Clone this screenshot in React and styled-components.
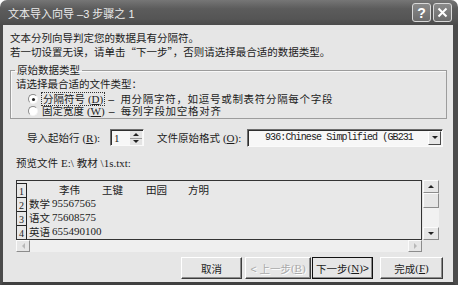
import styled, { createGlobalStyle } from "styled-components";

const GlobalStyle = createGlobalStyle`
  html, body {
    margin: 0;
    padding: 0;
    background: #ffffff;
  }
  body {
    font-family: "Liberation Sans", "Noto Sans CJK SC", sans-serif;
  }
`;

const SERIF = `"Liberation Serif", "Noto Sans CJK SC", serif`;

const Window = styled.div`
  width: 458px;
  height: 285px;
  display: flex;
  flex-direction: column;
  border-radius: 7px 7px 0 0;
  overflow: hidden;
  color: #1c1c1c;
  font-size: 10.5px;
`;

const TitleBar = styled.div`
  height: 25px;
  flex: none;
  display: flex;
  align-items: center;
  justify-content: space-between;
  padding: 0 6px 0 8px;
  background: linear-gradient(#767676, #5c5c5c 35%, #555555 75%, #4b4b4b);
  color: #ececec;
  font-size: 11px;
`;

const TitleButtons = styled.div`
  display: flex;
  gap: 2px;
`;

const TitleButton = styled.div`
  width: 17px;
  height: 17px;
  border: 1px solid #d9d9d9;
  border-radius: 3px;
  background: linear-gradient(#8a8a8a, #6c6c6c);
  color: #ffffff;
  display: flex;
  align-items: center;
  justify-content: center;
  font: bold 14px "Liberation Sans", sans-serif;
`;

const Body = styled.div`
  flex: 1;
  display: flex;
  flex-direction: column;
  background: #e6e6e6;
  border-left: 3px solid #4b4b4b;
  border-right: 5px solid #4b4b4b;
  border-bottom: 5px solid #404040;
  padding: 7px 5px 3px 7px;
`;

const Intro = styled.p`
  margin: 0;
  line-height: 13px;
`;

const Cjk = styled.span`
  font-family: "Noto Sans CJK SC", sans-serif;
`;

const Group = styled.fieldset`
  margin: 5px 1px 0 0;
  padding: 0 0 1px 5px;
  min-width: 0;
  border: 1px solid #9c9c9c;
  box-shadow: inset 1px 1px 0 #f8f8f8;
`;

const Legend = styled.legend`
  padding: 0 2px;
  margin-left: -1px;
  line-height: 13px;
`;

const Line = styled.div`
  line-height: 13px;
  padding-top: 1px;
`;

const RadioRow = styled.div`
  display: flex;
  align-items: center;
  gap: 4px;
  height: 12px;
  line-height: 12px;
  padding-left: 12px;
  margin-top: ${(p) => (p.$first ? "2px" : "0")};
  white-space: nowrap;
`;

const RadioDot = styled.span`
  width: 8px;
  height: 8px;
  border-radius: 50%;
  border: 1px solid;
  border-color: #8a8a8a #f4f4f4 #f4f4f4 #8a8a8a;
  background: #ffffff;
  display: flex;
  align-items: center;
  justify-content: center;
  &::after {
    content: "";
    width: 3px;
    height: 3px;
    border-radius: 50%;
    background: ${(p) => (p.$checked ? "#222" : "transparent")};
  }
`;

const Focus = styled.span`
  outline: 1px dotted #333;
  outline-offset: 0;
  padding: 0 1px;
  margin-right: 4px;
`;

const Hint = styled.span`
  margin-left: ${(p) => p.$ml || 0}px;
  letter-spacing: 0.7px;
  word-spacing: 2px;
`;

const Serif = styled.span`
  font-family: ${SERIF};
  font-size: 11px;
`;

const Key = styled.u`
  text-underline-offset: 1px;
`;

const ImportRow = styled.div`
  display: flex;
  align-items: center;
  height: 17px;
  margin-top: 10px;
  padding-left: 17px;
  padding-right: 5px;
  white-space: nowrap;
`;

const FieldLabel = styled.span`
  width: ${(p) => p.$w}px;
  flex: none;
  margin-left: ${(p) => p.$ml || 0}px;
`;

const Sunken = styled.div`
  height: 15px;
  border: 1px solid;
  border-color: #6e6e6e #fafafa #fafafa #6e6e6e;
  box-shadow: inset 1px 1px 0 #2e2e2e;
  background: #f7f7f7;
  display: flex;
  align-items: stretch;
`;

const Spinner = styled(Sunken)`
  width: 32px;
  flex: none;
`;

const SpinValue = styled.span`
  flex: 1;
  padding: 1px 0 0 3px;
  font: 11px ${SERIF};
  line-height: 14px;
`;

const SpinButtons = styled.div`
  width: 12px;
  display: flex;
  flex-direction: column;
  margin: 1px 1px 0 0;
  background: #e4e4e4;
`;

const SpinHalf = styled.div`
  flex: 1;
  display: flex;
  align-items: center;
  justify-content: center;
  border-bottom: ${(p) => (p.$top ? "1px solid #9a9a9a" : "none")};
`;

const Tri = styled.span`
  width: 0;
  height: 0;
  border-left: ${(p) => p.$s}px solid transparent;
  border-right: ${(p) => p.$s}px solid transparent;
  ${(p) =>
    p.$up
      ? `border-bottom: ${p.$s}px solid ${p.$c || "#222"};`
      : `border-top: ${p.$s}px solid ${p.$c || "#222"};`}
`;

const TriSide = styled.span`
  width: 0;
  height: 0;
  border-top: 3px solid transparent;
  border-bottom: 3px solid transparent;
  ${(p) =>
    p.$left
      ? `border-right: 3px solid #b8b8b8;`
      : `border-left: 3px solid #b8b8b8;`}
`;

const Select = styled(Sunken)`
  flex: 1;
  height: 16px;
`;

const SelectValue = styled.span`
  flex: 1;
  padding-left: 17px;
  font-family: "Liberation Mono", "DejaVu Sans Mono", monospace;
  font-size: 10px;
  letter-spacing: -0.9px;
  line-height: 16px;
  overflow: hidden;
`;

const SelectArrow = styled.div`
  width: 11px;
  margin: 1px 1px 1px 0;
  background: #e6e6e6;
  border: 1px solid;
  border-color: #ffffff #4a4a4a #4a4a4a #ffffff;
  display: flex;
  align-items: center;
  justify-content: center;
`;

const PreviewLabel = styled.div`
  margin-top: 11px;
  padding-left: 6px;
  line-height: 13px;
`;

const PreviewGrid = styled.div`
  margin: 10px 0 0 6px;
  display: grid;
  grid-template-columns: 406px 17px;
  grid-template-rows: 60px 12px;
`;

const Frame = styled.div`
  border: 1px solid #333333;
  background: #e8e8e8;
  padding-top: 2px;
  overflow: hidden;
`;

const PreviewRow = styled.div`
  display: flex;
  height: 14px;
  line-height: 14px;
  white-space: nowrap;
`;

const RowNum = styled.span`
  width: 10px;
  flex: none;
  border-top: 1px solid #222;
  border-right: 1px solid #222;
  font: 10px ${SERIF};
  line-height: 15px;
  text-align: center;
  box-sizing: border-box;
`;

const RowText = styled.span`
  padding-left: 2px;
  display: flex;
`;

const Cell = styled.span`
  width: ${(p) => p.$w}px;
  flex: none;
`;

const Digits = styled.span`
  font: 11px ${SERIF};
  margin-left: 2px;
`;

const HScroll = styled.div`
  background: #efefef;
  display: flex;
  justify-content: space-between;
`;

const ScrollBtn = styled.div`
  width: ${(p) => p.$w}px;
  height: ${(p) => p.$h}px;
  background: #e6e6e6;
  border: 1px solid;
  border-color: #fbfbfb #8c8c8c #8c8c8c #fbfbfb;
  box-sizing: border-box;
  display: flex;
  align-items: center;
  justify-content: center;
`;

const VScroll = styled.div`
  margin-left: 1px;
  background: #f1f1f1;
  display: flex;
  flex-direction: column;
  justify-content: space-between;
`;

const Thumb = styled(ScrollBtn)`
  flex: none;
`;

const VTop = styled.div`
  display: flex;
  flex-direction: column;
`;

const ButtonRow = styled.div`
  display: flex;
  justify-content: flex-end;
  margin-top: 5px;
  padding-right: 5px;
`;

const Button = styled.div`
  width: ${(p) => p.$w}px;
  height: 22px;
  margin-left: ${(p) => p.$ml}px;
  box-sizing: border-box;
  background: #e6e6e6;
  border: 1px solid;
  border-color: #ffffff #3c3c3c #3c3c3c #ffffff;
  box-shadow: inset -1px -1px 0 #8c8c8c;
  display: flex;
  align-items: center;
  justify-content: center;
  white-space: nowrap;
  color: ${(p) => (p.$disabled ? "#a9a9a9" : "#1c1c1c")};
  text-shadow: ${(p) => (p.$disabled ? "1px 1px 0 #ffffff" : "none")};
  outline: ${(p) => (p.$default ? "1px solid #111" : "none")};
  outline-offset: -1px;
`;

export default function App() {
  return (
    <>
      <GlobalStyle />
      <Window>
        <TitleBar>
          <span>文本导入向导 –3 步骤之 1</span>
          <TitleButtons>
            <TitleButton>?</TitleButton>
            <TitleButton>
              <svg width="11" height="11" viewBox="0 0 11 11">
                <path d="M1.5 1.5 L9.5 9.5 M9.5 1.5 L1.5 9.5" stroke="#fff" strokeWidth="2" />
              </svg>
            </TitleButton>
          </TitleButtons>
        </TitleBar>

        <Body>
          <Intro>
            文本分列向导判定您的数据具有分隔符。
            <br />
            若一切设置无误，请单击<Cjk>“</Cjk>下一步<Cjk>”</Cjk>，否则请选择最合适的数据类型。
          </Intro>

          <Group>
            <Legend>原始数据类型</Legend>
            <Line>请选择最合适的文件类型：</Line>
            <RadioRow $first>
              <RadioDot $checked />
              <span>
                <Focus>
                  分隔符号 <Serif>(<Key>D</Key>)</Serif>
                </Focus>
                <Hint>– 用分隔字符，如逗号或制表符分隔每个字段</Hint>
              </span>
            </RadioRow>
            <RadioRow>
              <RadioDot />
              <span>
                固定宽度 <Serif>(<Key>W</Key>)</Serif>
                <Hint $ml={4}>– 每列字段加空格对齐</Hint>
              </span>
            </RadioRow>
          </Group>

          <ImportRow>
            <FieldLabel $w={83}>
              导入起始行 <Serif>(<Key>R</Key>):</Serif>
            </FieldLabel>
            <Spinner>
              <SpinValue>1</SpinValue>
              <SpinButtons>
                <SpinHalf $top>
                  <Tri $up $s={3} />
                </SpinHalf>
                <SpinHalf>
                  <Tri $s={3} />
                </SpinHalf>
              </SpinButtons>
            </Spinner>
            <FieldLabel $w={90} $ml={13}>
              文件原始格式 <Serif>(<Key>O</Key>):</Serif>
            </FieldLabel>
            <Select>
              <SelectValue>936:Chinese Simplified (GB231</SelectValue>
              <SelectArrow>
                <Tri $s={3} />
              </SelectArrow>
            </Select>
          </ImportRow>

          <PreviewLabel>
            预览文件 <Serif>E:\</Serif> 教材 <Serif>\1s.txt:</Serif>
          </PreviewLabel>

          <PreviewGrid>
            <Frame>
              <PreviewRow>
                <RowNum>1</RowNum>
                <RowText>
                  <Cell $w={30} />
                  <Cell $w={43}>李伟</Cell>
                  <Cell $w={44}>王键</Cell>
                  <Cell $w={42}>田园</Cell>
                  <Cell $w={43}>方明</Cell>
                </RowText>
              </PreviewRow>
              <PreviewRow>
                <RowNum>2</RowNum>
                <RowText>
                  数学<Digits>95567565</Digits>
                </RowText>
              </PreviewRow>
              <PreviewRow>
                <RowNum>3</RowNum>
                <RowText>
                  语文<Digits>75608575</Digits>
                </RowText>
              </PreviewRow>
              <PreviewRow>
                <RowNum>4</RowNum>
                <RowText>
                  英语<Digits>655490100</Digits>
                </RowText>
              </PreviewRow>
            </Frame>

            <VScroll>
              <VTop>
                <ScrollBtn $w={16} $h={13}>
                  <Tri $up $s={3} />
                </ScrollBtn>
                <Thumb $w={16} $h={15} />
              </VTop>
              <ScrollBtn $w={16} $h={13}>
                <Tri $s={3} />
              </ScrollBtn>
            </VScroll>

            <HScroll>
              <ScrollBtn $w={14} $h={12}>
                <TriSide $left />
              </ScrollBtn>
              <ScrollBtn $w={14} $h={12}>
                <TriSide />
              </ScrollBtn>
            </HScroll>
          </PreviewGrid>

          <ButtonRow>
            <Button $w={61} $ml={0}>取消</Button>
            <Button $w={66} $ml={3} $disabled>
              &lt; 上一步 <Serif>(<Key>B</Key>)</Serif>
            </Button>
            <Button $w={61} $ml={1} $default>
              下一步 <Serif>(<Key>N</Key>)</Serif> &gt;
            </Button>
            <Button $w={63} $ml={7}>
              完成 <Serif>(<Key>F</Key>)</Serif>
            </Button>
          </ButtonRow>
        </Body>
      </Window>
    </>
  );
}
